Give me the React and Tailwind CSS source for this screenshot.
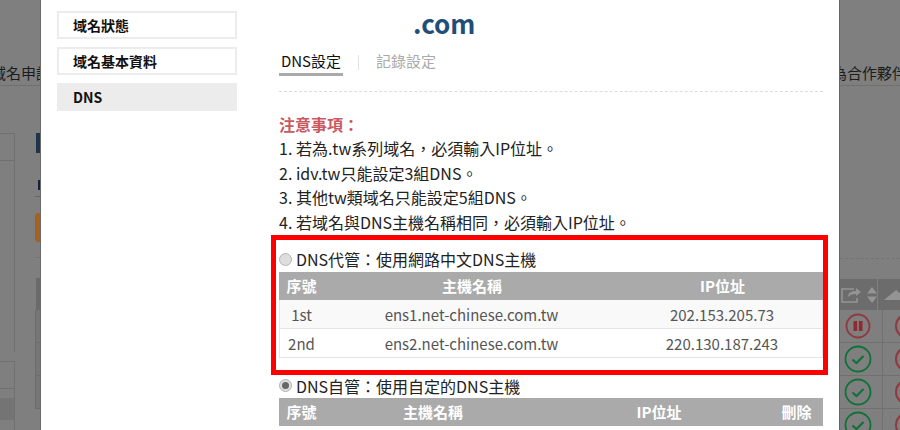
import React from 'react';

const Radio = ({ checked }) => (
  <span className="flex h-[13px] w-[13px] shrink-0 items-center justify-center rounded-full border border-[#b4b4b4] bg-[#dedede]">
    {checked && <span className="h-[7px] w-[7px] rounded-full bg-[#666]" />}
  </span>
);

const SideItem = ({ label, active }) => (
  <div className={`flex h-[28px] items-center border-2 border-[#ececec] pl-[14px] text-[14px] font-bold text-[#111] ${active ? 'bg-[#ececec]' : 'bg-white'}`}>
    {label}
  </div>
);

const PauseIcon = () => (
  <svg width="26" height="26" viewBox="0 0 26 26" fill="none">
    <circle cx="13" cy="13" r="11.5" stroke="#8f3a40" strokeWidth="1.8" />
    <rect x="8.5" y="8" width="3.6" height="10" fill="#8f2a30" />
    <rect x="13.9" y="8" width="3.6" height="10" fill="#8f2a30" />
  </svg>
);

const CheckIcon = () => (
  <svg width="28" height="28" viewBox="0 0 28 28" fill="none">
    <circle cx="14" cy="14" r="12.5" stroke="#0f7238" strokeWidth="1.8" />
    <path d="M8.5 14.5l4 3.5 7-7" stroke="#0f7238" strokeWidth="2.2" />
  </svg>
);

const RowCell = ({ children }) => (
  <div className="flex h-[33px] shrink-0 items-center justify-between overflow-hidden border-b border-[#707070]">
    <div className="flex h-full w-[43px] items-center justify-center border-r border-[#707070] pr-[6px]">{children}</div>
    <div className="-mr-[21px] h-[26px] w-[26px] shrink-0 rounded-full border-2 border-[#8f3a40]" />
  </div>
);

export default function App() {
  return (
    <div className="flex h-[430px] w-[900px] overflow-hidden bg-[#7f7f7f] font-['Noto_Sans_CJK_TC','Noto_Sans',sans-serif]">
      {/* dimmed page, left of the dialog */}
      <div className="flex w-[41px] shrink-0 flex-col overflow-hidden border-r border-[#6a6a6a]">
        <div className="flex h-[86px] shrink-0 items-end border-b border-[#707070] pb-[1px]">
          <span className="-ml-[9px] text-[15px] whitespace-nowrap text-[#1c1c1c]">域名申請</span>
        </div>
        <div className="flex flex-1">
          <div className="flex w-[35px] shrink-0 flex-col pt-[47px]">
            <div className="h-[219px] w-[15px] shrink-0 border-t border-r border-[#707070]">
              <div className="h-[27px] border-b border-[#707070]" />
            </div>
            <div className="mt-[9px] flex w-[15px] flex-1 flex-col border-r border-[#707070]">
              <div className="h-[28px] shrink-0 border-y border-[#707070]" />
              <div className="mt-[9px] h-[22px] shrink-0 bg-[#747474]" />
            </div>
          </div>
          <div className="flex flex-1 flex-col pt-[47px]">
            <div className="ml-px h-[20px] shrink-0 bg-[#1f3448]" />
            <div className="mt-[27px] h-[10px] w-[2px] shrink-0 self-end bg-[#14203c]" />
            <div className="mt-[6px] h-px shrink-0 bg-[#666]" />
            <div className="mt-[16px] h-[29px] shrink-0 rounded-l-[3px] bg-[#a5611f]" />
            <div className="mt-[15px] h-px shrink-0 bg-[#747474]" />
            <div className="mt-[20px] ml-px h-[32px] shrink-0 bg-[#6a6a6a]" />
            {[0, 1, 2].map((i) => (
              <div key={i} className="h-[33px] shrink-0 border-b border-l border-[#6c6c6c] bg-[#767676]" />
            ))}
          </div>
        </div>
      </div>

      {/* dialog */}
      <div className="flex w-[798px] shrink-0 bg-white">
        <div className="box-border flex w-[238px] shrink-0 flex-col gap-[8px] pt-[11px] pr-[42px] pl-[16px]">
          <SideItem label="域名狀態" />
          <SideItem label="域名基本資料" />
          <SideItem label="DNS" active />
        </div>

        <div className="w-[544px] shrink-0">
          <div className="flex h-[50px] items-center pb-[5px] pl-[134px] text-[26px] font-semibold text-[#1f4e79]">.com</div>

          <div className="flex h-[26px] items-start">
            <div className="h-[26px] w-[64px] border-b-[3px] border-[#aaa] text-center text-[15px] leading-[22px] text-[#111]">DNS設定</div>
            <div className="mt-[5px] ml-[15px] h-[15px] w-px bg-[#e3e3e3]" />
            <div className="ml-[17px] text-[15px] leading-[22px] text-[#aaa]">記錄設定</div>
          </div>

          <div className="mt-[15px] border-t border-dashed border-[#ddd]" />

          <div className="mt-[20px] mb-px text-[16px] leading-[24.4px] text-[#222]">
            <div className="font-bold text-[#c9585f]">注意事項：</div>
            <div>1. 若為.tw系列域名，必須輸入IP位址。</div>
            <div>2. idv.tw只能設定3組DNS。</div>
            <div>3. 其他tw類域名只能設定5組DNS。</div>
            <div>4. 若域名與DNS主機名稱相同，必須輸入IP位址。</div>
          </div>

          <div className="-mr-[5px] -ml-[8px] border-[5px] border-[#ff0000] pb-[12px] pl-[3px]">
            <div className="flex h-[32px] items-end gap-[4px] pb-px text-[16px] leading-[24px] text-[#222]">
              <span className="mb-[5px]"><Radio /></span>
              <span>DNS代管：使用網路中文DNS主機</span>
            </div>
            <div className="flex h-[28px] items-center bg-[#aaa] text-[15px] font-bold text-white">
              <div className="w-[45px] text-center">序號</div>
              <div className="w-[296px] text-center">主機名稱</div>
              <div className="flex-1 pl-[2px] text-center">IP位址</div>
            </div>
            <div className="flex h-[29px] items-center border-x border-b border-[#e4e4e4] bg-[#f9f9f9] pt-[2px] text-[15px] text-[#555]">
              <div className="w-[43px] text-center">1st</div>
              <div className="w-[297px] text-center">ens1.net-chinese.com.tw</div>
              <div className="flex-1 pl-[2px] text-center">202.153.205.73</div>
            </div>
            <div className="flex h-[29px] items-center border-x border-b border-[#e4e4e4] bg-white pt-[2px] text-[15px] text-[#555]">
              <div className="w-[43px] text-center">2nd</div>
              <div className="w-[297px] text-center">ens2.net-chinese.com.tw</div>
              <div className="flex-1 pl-[2px] text-center">220.130.187.243</div>
            </div>
          </div>

          <div className="flex h-[23px] items-center gap-[4px] pb-[2px] text-[16px] leading-[24px] text-[#222]">
            <Radio checked />
            <span>DNS自管：使用自定的DNS主機</span>
          </div>
          <div className="flex h-[28px] items-center bg-[#aaa] text-[15px] font-bold text-white">
            <div className="w-[45px] text-center">序號</div>
            <div className="w-[218px] text-center">主機名稱</div>
            <div className="w-[234px] text-center">IP位址</div>
            <div className="flex-1 pr-[6px] text-center whitespace-nowrap">刪除</div>
          </div>
        </div>
      </div>

      {/* dimmed page, right of the dialog */}
      <div className="flex min-w-0 flex-1 flex-col overflow-hidden border-l border-[#666]">
        <div className="flex h-[86px] shrink-0 items-end border-b border-[#707070] pb-[1px]">
          <span className="-ml-[8px] text-[15px] whitespace-nowrap text-[#1c1c1c]">為合作夥伴</span>
        </div>
        <div className="mt-[172px] shrink-0 border-t border-dashed border-[#747474]" />
        <div className="mt-[20px] flex h-[31px] shrink-0 bg-[#6c6c6c]">
          <div className="flex w-[43px] items-center gap-[4px] border-r border-[#808080] pl-px">
            <svg width="22" height="18" viewBox="0 0 22 18" fill="none" stroke="#949494" strokeWidth="1.6">
              <path d="M16 12v4H1V3h12" />
              <path d="M7 11c0-4 3-6 8-6V2l5 4-5 4V8c-4 0-6 1-8 3z" fill="#949494" stroke="none" />
            </svg>
            <svg width="10" height="18" viewBox="0 0 10 18" fill="#949494">
              <path d="M5 1l5 6.5H0z" />
              <path d="M5 17L0 10.500h10z" />
            </svg>
          </div>
          <div className="flex flex-1 items-center pl-[6px]">
            <div className="h-0 w-0 border-x-[12px] border-b-[10px] border-x-transparent border-b-[#949494]" />
          </div>
        </div>
        <RowCell><PauseIcon /></RowCell>
        <RowCell><CheckIcon /></RowCell>
        <RowCell><CheckIcon /></RowCell>
        <RowCell><CheckIcon /></RowCell>
      </div>
    </div>
  );
}
